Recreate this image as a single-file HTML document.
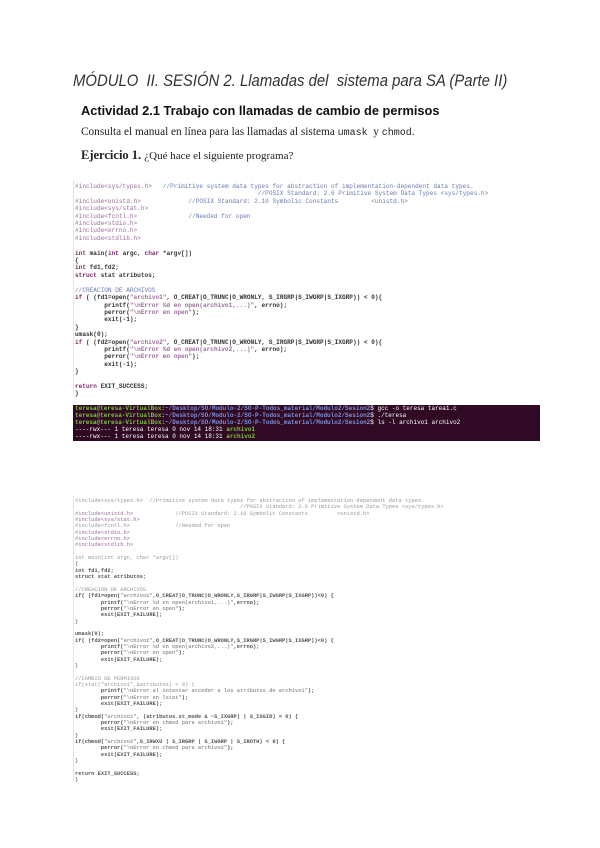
<!DOCTYPE html>
<html><head><meta charset="utf-8"><style>
body{margin:0;width:600px;height:848px;background:#fff;position:relative;overflow:hidden;font-family:"Liberation Sans",sans-serif}
.a{position:absolute;white-space:pre}
.c1{font-family:"Liberation Mono",monospace;font-size:6.1px;line-height:7.4px;color:#333}
.c2{font-family:"Liberation Mono",monospace;font-size:5.4px;line-height:6.35px;color:#555}
.p{color:#9a6c9a}.k{color:#7a2a6a;font-weight:bold}.m{color:#6a7ab0}.g{color:#999}
.t{font-family:"Liberation Mono",monospace;font-size:6px;line-height:7px;color:#fff;background:#300a24;}
.gr{color:#7cc23a;font-weight:bold}.bl{color:#7d8fd8;font-weight:bold}
</style></head><body>
<div class="a" style="left:73px;top:71px;font-size:17px;font-style:italic;color:#333;transform:scaleX(0.875);transform-origin:0 0">MÓDULO  II. SESIÓN 2. Llamadas del  sistema para SA (Parte II)</div>
<div class="a" style="left:81px;top:103px;font-size:12.8px;font-weight:bold;color:#111">Actividad 2.1 Trabajo con llamadas de cambio de permisos</div>
<div class="a" style="left:81px;top:126px;font-size:11.3px;font-family:'Liberation Serif',serif;color:#222">Consulta el manual en línea para las llamadas al sistema <span style="font-family:'Liberation Mono',monospace;font-size:10px">umask</span>  y <span style="font-family:'Liberation Mono',monospace;font-size:10px">chmod</span>.</div>
<div class="a" style="left:81px;top:148px;font-size:12.5px;font-family:'Liberation Serif',serif;color:#222"><b>Ejercicio 1.</b> <span style="font-size:11px">¿Qué hace el siguiente programa?</span></div>
<div class="a" style="left:73px;top:180px;width:1px;height:215px;background:#e4e4e4"></div>
<div class="a c1" style="left:75px;top:183px"><span class="p">#include&lt;sys/types.h&gt;</span>   <span class="m">//Primitive system data types for abstraction of implementation-dependent data types.</span>
<span class="m">                                                  //POSIX Standard: 2.6 Primitive System Data Types &lt;sys/types.h&gt;</span>
<span class="p">#include&lt;unistd.h&gt;</span>             <span class="m">//POSIX Standard: 2.10 Symbolic Constants         &lt;unistd.h&gt;</span>
<span class="p">#include&lt;sys/stat.h&gt;</span>
<span class="p">#include&lt;fcntl.h&gt;</span>              <span class="m">//Needed for open</span>
<span class="p">#include&lt;stdio.h&gt;</span>
<span class="p">#include&lt;errno.h&gt;</span>
<span class="p">#include&lt;stdlib.h&gt;</span>

<b><span class="k">int</span> main(<span class="k">int</span> argc, <span class="k">char</span> *argv[])</b>
<b>{</b>
<b><span class="k">int</span> fd1,fd2;</b>
<b><span class="k">struct</span> stat atributos;</b>

<span class="m">//CREACION DE ARCHIVOS</span>
<b><span class="k">if</span> ( (fd1=open(<span class="p">"archivo1"</span>, O_CREAT|O_TRUNC|O_WRONLY, S_IRGRP|S_IWGRP|S_IXGRP)) &lt; 0){</b>
<b>        printf(<span class="p">"\nError %d en open(archivo1,...)"</span>, errno);</b>
<b>        perror(<span class="p">"\nError en open"</span>);</b>
<b>        exit(-1);</b>
<b>}</b>
<b>umask(0);</b>
<b><span class="k">if</span> ( (fd2=open(<span class="p">"archivo2"</span>, O_CREAT|O_TRUNC|O_WRONLY, S_IRGRP|S_IWGRP|S_IXGRP)) &lt; 0){</b>
<b>        printf(<span class="p">"\nError %d en open(archivo2,...)"</span>, errno);</b>
<b>        perror(<span class="p">"\nError en open"</span>);</b>
<b>        exit(-1);</b>
<b>}</b>

<b><span class="k">return</span> EXIT_SUCCESS;</b>
<b>}</b></div>
<div class="a t" style="left:73px;top:405px;width:465px;height:36px;padding:0 0 0 2px"><span class="gr">teresa@teresa-VirtualBox</span>:<span class="bl">~/Desktop/SO/Modulo-2/SO-P-Todos_material/Modulo2/Sesion2</span>$ gcc -o teresa tarea1.c
<span class="gr">teresa@teresa-VirtualBox</span>:<span class="bl">~/Desktop/SO/Modulo-2/SO-P-Todos_material/Modulo2/Sesion2</span>$ ./teresa
<span class="gr">teresa@teresa-VirtualBox</span>:<span class="bl">~/Desktop/SO/Modulo-2/SO-P-Todos_material/Modulo2/Sesion2</span>$ ls -l archivo1 archivo2
----rwx--- 1 teresa teresa 0 nov 14 18:31 <span class="gr">archivo1</span>
----rwx--- 1 teresa teresa 0 nov 14 18:31 <span class="gr">archivo2</span></div>
<div class="a" style="left:73px;top:496px;width:1px;height:285px;background:#e4e4e4"></div>
<div class="a c2" style="left:75px;top:498px"><span class="g">#include&lt;sys/types.h&gt;  //Primitive system data types for abstraction of implementation-dependent data types.</span>
<span class="g">                                                   //POSIX Standard: 2.6 Primitive System Data Types &lt;sys/types.h&gt;</span>
<span class="p">#include&lt;unistd.h&gt;</span>             <span class="g">//POSIX Standard: 2.10 Symbolic Constants         &lt;unistd.h&gt;</span>
<span class="p">#include&lt;sys/stat.h&gt;</span>
<span class="g">#include&lt;fcntl.h&gt;</span>              <span class="g">//Needed for open</span>
<span class="p">#include&lt;stdio.h&gt;</span>
<span class="p">#include&lt;errno.h&gt;</span>
<span class="p">#include&lt;stdlib.h&gt;</span>

<span class="g">int main(int argc, char *argv[])</span>
{
<b>int fd1,fd2;</b>
<b>struct stat atributos;</b>

<span class="g">//CREACION DE ARCHIVOS</span>
<b>if( (fd1=open(<span class="g">"archivo1"</span>,O_CREAT|O_TRUNC|O_WRONLY,S_IRGRP|S_IWGRP|S_IXGRP))&lt;0) {</b>
<b>        printf(<span class="g">"\nError %d en open(archivo1,...)"</span>,errno);</b>
<b>        perror(<span class="g">"\nError en open"</span>);</b>
<b>        exit(EXIT_FAILURE);</b>
}

<b>umask(0);</b>
<b>if( (fd2=open(<span class="g">"archivo2"</span>,O_CREAT|O_TRUNC|O_WRONLY,S_IRGRP|S_IWGRP|S_IXGRP))&lt;0) {</b>
<b>        printf(<span class="g">"\nError %d en open(archivo2,...)"</span>,errno);</b>
<b>        perror(<span class="g">"\nError en open"</span>);</b>
<b>        exit(EXIT_FAILURE);</b>
}

<span class="g">//CAMBIO DE PERMISOS</span>
<span class="g">if(stat("archivo1",&amp;atributos) &lt; 0) {</span>
<b>        printf(<span class="g">"\nError al intentar acceder a los atributos de archivo1"</span>);</b>
<b>        perror(<span class="g">"\nError en lstat"</span>);</b>
<b>        exit(EXIT_FAILURE);</b>
}
<b>if(chmod(<span class="g">"archivo1"</span>, (atributos.st_mode &amp; ~S_IXGRP) | S_ISGID) &lt; 0) {</b>
<b>        perror(<span class="g">"\nError en chmod para archivo1"</span>);</b>
<b>        exit(EXIT_FAILURE);</b>
}
<b>if(chmod(<span class="g">"archivo2"</span>,S_IRWXU | S_IRGRP | S_IWGRP | S_IROTH) &lt; 0) {</b>
<b>        perror(<span class="g">"\nError en chmod para archivo2"</span>);</b>
<b>        exit(EXIT_FAILURE);</b>
}

<b>return EXIT_SUCCESS;</b>
}</div>
</body></html>
